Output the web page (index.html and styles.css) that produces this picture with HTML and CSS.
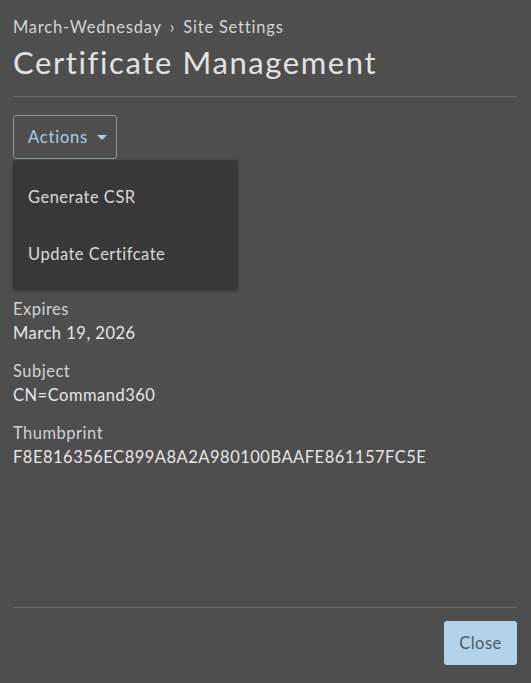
FILE: index.html
```html
<!DOCTYPE html>
<html lang="en">
<head>
<meta charset="utf-8">
<title>Certificate Management</title>
<link rel="stylesheet" href="styles.css">
</head>
<body>
<div class="page">
  <header class="head">
    <div class="crumbs"><span>March-Wednesday</span><span class="sep">›</span><span>Site Settings</span></div>
    <h1 class="title">Certificate Management</h1>
  </header>
  <main class="body">
    <div class="actions">
      <button class="actions-btn" type="button">Actions <span class="caret"></span></button>
      <div class="menu">
        <div class="menu-item">Generate CSR</div>
        <div class="menu-item">Update Certifcate</div>
      </div>
    </div>
    <dl class="fields">
      <div class="field"><dt>Expires</dt><dd>March 19, 2026</dd></div>
      <div class="field"><dt>Subject</dt><dd>CN=Command360</dd></div>
      <div class="field"><dt>Thumbprint</dt><dd>F8E816356EC899A8A2A980100BAAFE861157FC5E</dd></div>
    </dl>
  </main>
  <footer class="foot">
    <button class="close-btn" type="button">Close</button>
  </footer>
</div>
</body>
</html>
```
FILE: styles.css
```css
html, body {
  margin: 0;
  height: 100%;
  background: #4e4e4e;
}
body {
  font-family: "Lato", "Open Sans", sans-serif;
  color: #dcdcdc;
  letter-spacing: 0.5px;
}
.page {
  height: 100vh;
  box-sizing: border-box;
  padding: 0 14px 0 13px;
  display: flex;
  flex-direction: column;
}
.head {
  padding-top: 17px;
  padding-bottom: 16px;
  border-bottom: 1px solid #6a6a6a;
}
.crumbs {
  font-size: 16.5px;
  line-height: 20px;
  color: #d4d4d4;
  letter-spacing: 0.8px;
  display: flex;
  gap: 8px;
}
.title {
  margin: 7px 0 0;
  font-weight: 400;
  font-size: 31px;
  line-height: 36px;
  color: #e2e2e2;
  letter-spacing: 1.6px;
}
.body {
  flex: 1;
  padding-top: 18px;
}
.actions {
  position: relative;
}
.actions-btn {
  height: 44px;
  width: 104px;
  box-sizing: border-box;
  border: 1px solid #8799a5;
  border-radius: 3px;
  background: transparent;
  color: #a7cde8;
  font-family: inherit;
  font-size: 16.5px;
  letter-spacing: 0.8px;
  padding: 0 0 0 14px;
  display: flex;
  align-items: center;
  gap: 9px;
}
.caret {
  width: 0;
  height: 0;
  border-left: 5px solid transparent;
  border-right: 5px solid transparent;
  border-top: 5px solid #a7cde8;
}
.menu {
  position: absolute;
  left: 0;
  top: 45px;
  width: 225px;
  padding: 8px 0;
  background: #383838;
  border-radius: 3px;
  box-shadow: 0 1px 3px rgba(0,0,0,0.35);
}
.menu-item {
  height: 57px;
  display: flex;
  align-items: center;
  padding-left: 15px;
  font-size: 16.5px;
  color: #dadada;
}
.fields {
  margin: 138px 0 0;
  display: flex;
  flex-direction: column;
  gap: 14px;
}
.field dt {
  font-size: 16.5px;
  line-height: 24px;
  color: #d2d2d2;
}
.field dd {
  margin: 0;
  font-size: 16.5px;
  line-height: 24px;
  color: #e6e6e6;
}
.foot {
  border-top: 1px solid #6a6a6a;
  padding: 13px 0 18px;
  display: flex;
  justify-content: flex-end;
}
.close-btn {
  width: 73px;
  height: 44px;
  border: none;
  border-radius: 3px;
  background: #b3d3ea;
  color: #4f5860;
  font-family: inherit;
  font-size: 16.5px;
  letter-spacing: 0.5px;
}
```
